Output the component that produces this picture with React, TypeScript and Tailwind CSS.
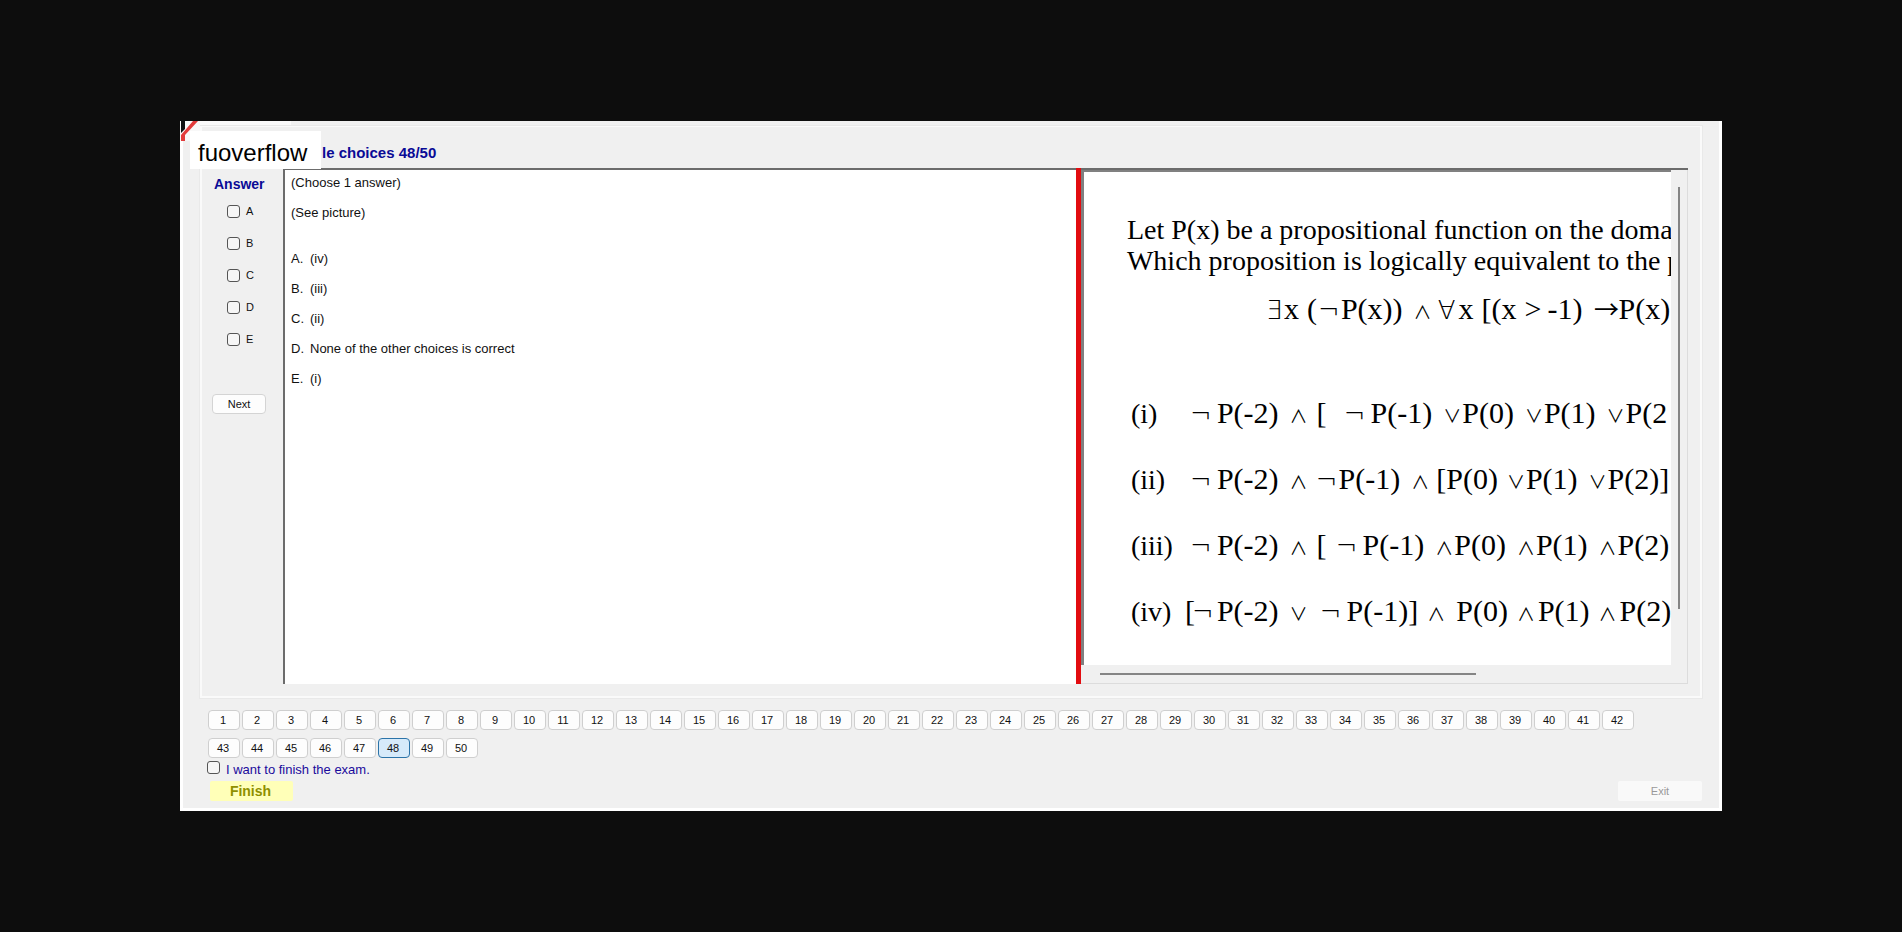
import React from "react";

type Token = { t: string; op?: boolean; gap?: string };

const choices = ["A", "B", "C", "D", "E"];
const options = [
  ["A.", "(iv)"],
  ["B.", "(iii)"],
  ["C.", "(ii)"],
  ["D.", "None of the other choices is correct"],
  ["E.", "(i)"],
];
const CURRENT = 48;

const premise: Token[] = [
  { t: "∃", op: true },
  { t: "x", gap: "ml-0.5" },
  { t: "(", gap: "ml-2" },
  { t: "¬", op: true, gap: "ml-1" },
  { t: "P(x))", gap: "ml-1" },
  { t: "∧", op: true, gap: "ml-3" },
  { t: "∀", op: true, gap: "ml-2" },
  { t: "x", gap: "ml-1" },
  { t: "[(x", gap: "ml-2" },
  { t: ">", gap: "ml-2" },
  { t: "-1)", gap: "ml-1.5" },
  { t: "→", op: true, gap: "ml-3" },
  { t: "P(x)" },
];

const rows: { label: string; tokens: Token[] }[] = [
  {
    label: "(i)",
    tokens: [
      { t: "¬", op: true, gap: "ml-2" },
      { t: "P(-2)", gap: "ml-2" },
      { t: "∧", op: true, gap: "ml-3" },
      { t: "[", gap: "ml-2.5" },
      { t: "¬", op: true, gap: "ml-5" },
      { t: "P(-1)", gap: "ml-2" },
      { t: "∨", op: true, gap: "ml-3" },
      { t: "P(0)", gap: "ml-0.5" },
      { t: "∨", op: true, gap: "ml-3" },
      { t: "P(1)", gap: "ml-0.5" },
      { t: "∨", op: true, gap: "ml-3" },
      { t: "P(2", gap: "ml-0.5" },
    ],
  },
  {
    label: "(ii)",
    tokens: [
      { t: "¬", op: true, gap: "ml-2" },
      { t: "P(-2)", gap: "ml-2" },
      { t: "∧", op: true, gap: "ml-3" },
      { t: "¬", op: true, gap: "ml-3" },
      { t: "P(-1)", gap: "ml-1" },
      { t: "∧", op: true, gap: "ml-3" },
      { t: "[P(0)", gap: "ml-2" },
      { t: "∨", op: true, gap: "ml-2.5" },
      { t: "P(1)", gap: "ml-0.5" },
      { t: "∨", op: true, gap: "ml-3" },
      { t: "P(2)]", gap: "ml-0.5" },
    ],
  },
  {
    label: "(iii)",
    tokens: [
      { t: "¬", op: true, gap: "ml-2" },
      { t: "P(-2)", gap: "ml-2" },
      { t: "∧", op: true, gap: "ml-3" },
      { t: "[", gap: "ml-2.5" },
      { t: "¬", op: true, gap: "ml-3" },
      { t: "P(-1)", gap: "ml-2" },
      { t: "∧", op: true, gap: "ml-3" },
      { t: "P(0)", gap: "ml-0.5" },
      { t: "∧", op: true, gap: "ml-3" },
      { t: "P(1)", gap: "ml-0.5" },
      { t: "∧", op: true, gap: "ml-3" },
      { t: "P(2)", gap: "ml-0.5" },
    ],
  },
  {
    label: "(iv)",
    tokens: [
      { t: "[" },
      { t: "¬", op: true },
      { t: "P(-2)", gap: "ml-1.5" },
      { t: "∨", op: true, gap: "ml-3" },
      { t: "¬", op: true, gap: "ml-4" },
      { t: "P(-1)]", gap: "ml-2" },
      { t: "∧", op: true, gap: "ml-2.5" },
      { t: "P(0)", gap: "ml-3" },
      { t: "∧", op: true, gap: "ml-2.5" },
      { t: "P(1)", gap: "ml-1" },
      { t: "∧", op: true, gap: "ml-2.5" },
      { t: "P(2)", gap: "ml-1" },
    ],
  },
];

const light = "text-[26px] font-extralight font-['DejaVu_Sans',sans-serif]";
const opStyle: Record<string, string> = {
  "∃": `w-4 ${light}`,
  "∀": `w-4 ${light}`,
  "¬": `w-4 ${light}`,
  "→": "w-6 text-[25px] font-['Noto_Sans_CJK_JP',sans-serif]",
  "∧": "w-4 text-[18px] font-['Noto_Sans_CJK_JP',sans-serif]",
  "∨": "w-4 text-[18px] font-['Noto_Sans_CJK_JP',sans-serif]",
};

function Formula({ tokens }: { tokens: Token[] }) {
  return (
    <span className="flex h-8 items-baseline whitespace-nowrap">
      {tokens.map((k, i) => (
        <span
          key={i}
          className={`${k.gap ?? ""} leading-8 ${
            k.op ? `flex shrink-0 justify-center ${opStyle[k.t]}` : "text-[30px]"
          }`}
        >
          {k.t}
        </span>
      ))}
    </span>
  );
}

const box =
  "size-[13px] shrink-0 appearance-none rounded-[3px] border border-[#555] bg-[#f6f6f6] checked:bg-[#0067c0]";

export default function App() {
  return (
    <main className="flex min-h-screen items-center bg-[#0d0d0d] px-[180px] font-['Liberation_Sans',sans-serif] text-[#111]">
      <div className="relative min-w-0 flex-1 border-x-[3px] border-b-[3px] border-white bg-[#f0f0f0]">
        <div className="h-[5px] w-[108px] bg-[#fafafa]" />
        <svg className="absolute -left-[3px] top-0 h-5 w-5" viewBox="0 0 20 20" aria-hidden="true">
          <rect width="20" height="20" fill="#f8f8f8" />
          <path d="M1 0h4v8l-4 4z" fill="#111" />
          <path d="M1 20v-6L13 0h5L5 14v6z" fill="#e23b3b" />
        </svg>
        <div className="absolute left-[7px] top-[10px] bg-white pb-[2px] pl-2 pr-[14px] pt-2 text-2xl leading-7 text-black">
          fuoverflow
        </div>

        <section className="mx-[17px] border-2 border-t border-[#fafafa] outline outline-[#e9e9e9]">
          <h1 className="h-[41px] pl-[120px] pt-4 text-[15px] leading-5 font-bold text-[#0a0a96]">
            le choices 48/50
          </h1>
          <div className="flex h-[516px]">
            <fieldset className="flex w-[81px] shrink-0 flex-col">
              <legend className="float-left h-[37px] w-full pl-3 pt-[6px] text-sm leading-5 font-bold text-[#0a0a96]">
                Answer
              </legend>
              <div className="flex flex-col gap-[19px] pl-[25px]">
                {choices.map((c) => (
                  <label key={c} className="flex h-[13px] items-center gap-[6px] text-[11px] leading-[13px]">
                    <input type="checkbox" className={box} />
                    {c}
                  </label>
                ))}
              </div>
              <button
                type="button"
                className="ml-[10px] mt-12 h-5 w-[54px] rounded-[4px] border border-[#d4d4d4] bg-[#fdfdfd] text-[11px] leading-4"
              >
                Next
              </button>
            </fieldset>

            <article className="min-w-0 flex-[790] border-l-2 border-t-2 border-[#6c6c6c] bg-white pl-[6px] pt-1 text-[13px] leading-[18px]">
              <p>(Choose 1 answer)</p>
              <p className="mt-3">(See picture)</p>
              <ul className="mt-7 flex flex-col gap-3">
                {options.map(([k, v]) => (
                  <li key={k} className="flex">
                    <span className="w-[19px]">{k}</span>
                    {v}
                  </li>
                ))}
              </ul>
            </article>

            <div className="w-[5px] shrink-0 bg-[#e20c10]" />

            <div className="mr-[12px] flex min-w-0 flex-[611] flex-col border-t-2 border-[#6c6c6c] bg-[#f0f0f0]">
              <div className="flex h-[495px]">
                <div className="min-w-0 flex-1 overflow-hidden border-l-[3px] border-t-2 border-[#808080] bg-white pl-[43px] pt-[42px] font-['Liberation_Serif',serif] text-black">
                  <p className="whitespace-nowrap text-[28px] leading-[31px]">
                    Let P(x) be a propositional function on the doma
                    <br />
                    Which proposition is logically equivalent to the p
                  </p>
                  <div className="pl-[139px] pt-4">
                    <Formula tokens={premise} />
                  </div>
                  <div className="flex flex-col gap-[34px] pt-[73px]">
                    {rows.map((r) => (
                      <div key={r.label} className="flex h-8 items-baseline">
                        <span className="w-[58px] shrink-0 pl-1 text-[28px] leading-8">{r.label}</span>
                        <Formula tokens={r.tokens} />
                      </div>
                    ))}
                  </div>
                </div>
                <div className="w-[17px] shrink-0 border-r border-[#dcdcdc] pl-[7px] pt-[17px]">
                  <div className="h-[422px] w-[2px] bg-[#858585]" />
                </div>
              </div>
              <div className="flex-1 border-b border-r border-[#dcdcdc] pl-[19px] pt-[8px]">
                <div className="h-[2px] w-[64%] bg-[#858585]" />
              </div>
            </div>
          </div>
          <div className="h-[12px]" />
        </section>

        <nav className="grid grid-cols-[repeat(auto-fill,32px)] gap-x-[2px] gap-y-2 pl-[25px] pr-[70px] pt-3">
          {Array.from({ length: 50 }, (_, i) => i + 1).map((n) => (
            <button
              key={n}
              type="button"
              className={`h-5 rounded-[4px] border pr-[2px] text-[11px] leading-4 ${
                n === CURRENT ? "border-[#2b73a8] bg-[#d6eafa]" : "border-[#cfcfcf] bg-[#fdfdfd]"
              }`}
            >
              {n}
            </button>
          ))}
        </nav>

        <label className="mt-[3px] flex h-[19px] w-fit pl-6 text-[13px] leading-[18px] text-[#1a0a9c]">
          <input type="checkbox" className={`${box} mr-[6px]`} />
          I want to finish the exam.
        </label>
        <div className="flex justify-between pb-[7px] pl-[27px] pr-[17px] pt-px">
          <button type="button" className="h-5 w-[83px] rounded-[2px] bg-[#ffffb8] pr-[2px] text-sm leading-5 font-bold text-[#8f8f00]">
            Finish
          </button>
          <button type="button" disabled className="h-5 w-[84px] rounded-[2px] bg-[#f9f9f9] text-[11px] leading-5 text-[#999]">
            Exit
          </button>
        </div>
      </div>
    </main>
  );
}
